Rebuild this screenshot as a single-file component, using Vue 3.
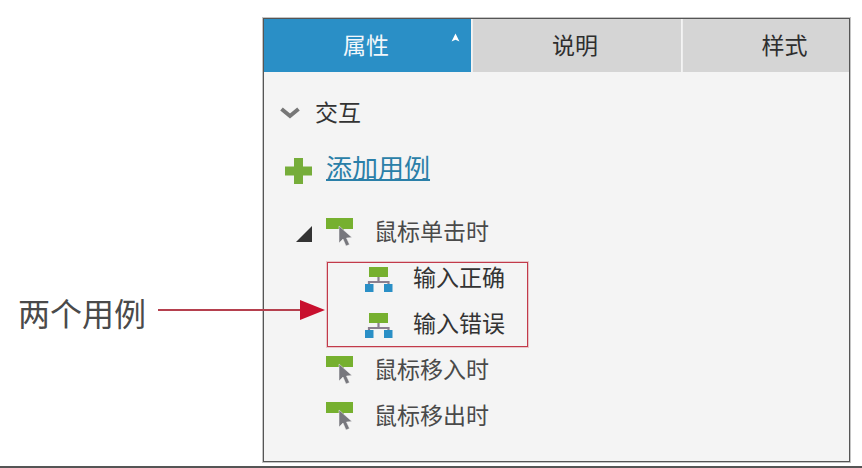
<script setup>
const tabs = [
  { label: '属性', cls: 'tab-active' },
  { label: '说明', cls: 'tab-mid' },
  { label: '样式', cls: 'tab-last' }
]
const cases = ['输入正确', '输入错误']
const laterEvents = ['鼠标移入时', '鼠标移出时']
</script>

<template>
  <div class="page">
    <div class="panel">
      <div class="tabs">
        <div v-for="t in tabs" :key="t.label" class="tab" :class="t.cls">
          <span class="label">{{ t.label }}</span>
          <svg v-if="t.cls === 'tab-active'" class="pin" viewBox="0 0 8 8" width="9" height="9">
            <path d="M4 0.5 L7.500 7.500 L4 6 L0.500 7.500 Z" fill="#fff" />
          </svg>
        </div>
      </div>
      <div class="body">
        <div class="section">
          <svg class="chevron" viewBox="0 0 20 12" width="20" height="12">
            <path d="M1.5 2 L10 9 L18.5 2" fill="none" stroke="#777" stroke-width="4" />
          </svg>
          <span class="label">交互</span>
        </div>
        <div class="add">
          <svg class="plus" viewBox="0 0 27 26" width="27" height="26">
            <path d="M9 0 H18 V8.5 H27 V17.5 H18 V26 H9 V17.5 H0 V8.5 H9 Z" fill="#76ad3a" />
          </svg>
          <span class="label link">添加用例</span>
        </div>

        <div class="event event-open">
          <svg class="tri" viewBox="0 0 16 16" width="16" height="16">
            <path d="M16 0 V16 H0 Z" fill="#333" />
          </svg>
          <svg class="ev-icon" viewBox="0 0 28 28" width="28" height="28">
            <path d="M0 0 H27 V11 H18 L16 14 H13 V11 H0 Z" fill="#76b02f" />
            <path d="M13 8 V25 L17 21 L20 28 L23.5 26.5 L20.5 20 L26 19.5 Z" fill="#77777d" stroke="#f4f4f4" stroke-width="0.5" />
          </svg>
          <span class="label">鼠标单击时</span>
        </div>

        <div class="case-box">
          <div v-for="c in cases" :key="c" class="case">
            <svg class="case-icon" viewBox="0 0 28 26" width="28" height="26">
              <rect x="4" y="0" width="19" height="10" fill="#76b02f" />
              <path d="M13.5 10 V14.5 M4 17 V15 H23.500 V17" fill="none" stroke="#8a7f8f" stroke-width="2.200" />
              <rect x="0" y="17" width="8.500" height="8" fill="#2a8fc6" />
              <rect x="19" y="17" width="8.500" height="8" fill="#2a8fc6" />
            </svg>
            <span class="label">{{ c }}</span>
          </div>
        </div>

        <div v-for="e in laterEvents" :key="e" class="event">
          <svg class="ev-icon" viewBox="0 0 28 28" width="28" height="28">
            <path d="M0 0 H27 V11 H18 L16 14 H13 V11 H0 Z" fill="#76b02f" />
            <path d="M13 8 V25 L17 21 L20 28 L23.5 26.5 L20.5 20 L26 19.5 Z" fill="#77777d" stroke="#f4f4f4" stroke-width="0.5" />
          </svg>
          <span class="label">{{ e }}</span>
        </div>
      </div>
    </div>

    <div class="note">
      <span class="note-text">两个用例</span>
      <span class="note-line"></span>
      <span class="note-head"></span>
    </div>
  </div>
</template>

<style>
html, body { margin: 0; background: #fff; }
</style>

<style scoped>
.page {
  position: relative;
  box-sizing: border-box;
  width: 862px;
  height: 468px;
  padding: 18px 0 0 263px;
  border-bottom: 2px solid #555;
  overflow: hidden;
  background: #fff;
  font-family: "Noto Sans CJK SC", "Noto Sans", sans-serif;
  color: #3c3c3c;
}
.panel {
  box-sizing: border-box;
  width: 587px;
  height: 444px;
  border: 1px solid #555;
  outline: 1px solid rgba(85, 85, 85, 0.35);
  background: #f4f4f4;
  display: flex;
  flex-direction: column;
}
.label { margin-top: -4px; }
.tabs {
  display: flex;
  height: 53px;
  flex: none;
  font-size: 23px;
}
.tab {
  position: relative;
  box-sizing: border-box;
  display: flex;
  align-items: center;
  justify-content: center;
  background: #d5d5d5;
  color: #2e2e2e;
}
.tab-active {
  width: 207px;
  padding-right: 3px;
  background: #2a8fc6;
  color: #f2f7fb;
}
.tab-mid {
  width: 209px;
  margin-left: 1px;
  padding-right: 4px;
  border-left: 1px solid #eee;
}
.tab-last {
  flex: 1;
  margin-left: 1px;
  padding-left: 37px;
  border-left: 1px solid #eee;
}
.pin {
  position: absolute;
  top: 14px;
  right: 11px;
}
.body {
  display: flex;
  flex-direction: column;
  padding-top: 25px;
  font-size: 23px;
}
.section {
  display: flex;
  align-items: center;
  height: 32px;
  padding-left: 16px;
  gap: 15px;
  color: #333;
}
.add {
  display: flex;
  align-items: center;
  height: 32px;
  margin-top: 23px;
  padding-left: 21px;
  gap: 14px;
}
.plus { margin-top: 6px; }
.link {
  font-size: 26px;
  color: #2a7fa8;
  text-decoration: underline;
  text-underline-offset: 1px;
}
.event {
  display: flex;
  align-items: center;
  height: 32px;
  margin-bottom: 14px;
  padding-left: 62px;
  gap: 20px;
  color: #4a4a4a;
}
.event-open {
  margin-top: 32px;
  padding-left: 32px;
  gap: 0;
}
.tri { margin-right: 14px; margin-top: 4px; }
.event-open .label { margin-left: 20px; }
.case-box {
  box-sizing: border-box;
  width: 201px;
  height: 85px;
  margin: 0 0 7px 63px;
  border: 1px solid #c23a4a;
  outline: 1px solid rgba(194, 58, 74, 0.25);
  display: flex;
  flex-direction: column;
  gap: 14px;
}
.case {
  display: flex;
  align-items: center;
  height: 32px;
  padding-left: 37px;
  gap: 20px;
  color: #333;
}
.case:first-child { margin-top: -1px; }
.case-icon { margin-top: 4px; }
.note {
  position: absolute;
  left: 18px;
  top: 290px;
  display: flex;
  align-items: center;
  height: 44px;
}
.note-text {
  font-size: 32px;
  line-height: 44px;
  color: #4a4a4a;
}
.note-line {
  width: 142px;
  height: 2px;
  margin: -4px 0 0 12px;
  background: #b5404e;
}
.note-head {
  width: 0;
  height: 0;
  margin-top: -4px;
  border-left: 25px solid #c8102e;
  border-top: 10px solid transparent;
  border-bottom: 10px solid transparent;
}
</style>
